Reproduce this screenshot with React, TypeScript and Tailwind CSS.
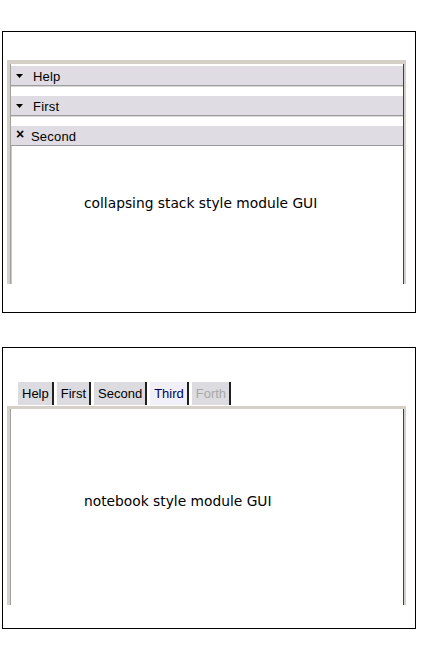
import React from 'react'

const HEAD = 'bg-[#dfdde3]'
const LIGHT = 'border-[#d4d0c8]'

function Down() {
  return (
    <svg width="7" height="4" viewBox="0 0 7 4" className="shrink-0">
      <polygon points="0,0 7,0 3.5,4" fill="#000" />
    </svg>
  )
}

function StackHeader({ label, open }: { label: string; open?: boolean }) {
  return (
    <div className={`h-[20px] ${HEAD} flex items-center pl-[5px] border-b border-[#9c9c9c]`}>
      {open ? (
        <span className="w-[7px] text-[14px] leading-none font-bold text-black -mt-[3px]">×</span>
      ) : (
        <Down />
      )}
      <span className={`${open ? 'ml-[8px]' : 'ml-[10px]'} mt-px text-[13px] leading-none text-black tracking-[0.2px]`}>{label}</span>
    </div>
  )
}

const TABS = [
  { label: 'Help', kind: 'normal' },
  { label: 'First', kind: 'normal' },
  { label: 'Second', kind: 'normal' },
  { label: 'Third', kind: 'active' },
  { label: 'Forth', kind: 'disabled' },
]

export default function App() {
  return (
    <div className="w-[421px] h-[650px] bg-white overflow-hidden" style={{ fontFamily: '"Liberation Sans", Arial, sans-serif' }}>
      {/* collapsing stack */}
      <div className="pt-[31px] pl-[2px]">
        <div className="w-[414px] h-[282px] border border-black pt-[28px] pl-[4px]">
          <div className={`w-[399px] h-[224px] border-t-[4px] border-l-[3px] border-r-[2px] ${LIGHT} bg-white`}>
            <div className="h-full pt-[2px] border-l border-r border-l-[#a0a0a0] border-r-[#404040] flex flex-col">
              {['Help', 'First'].map(l => (
                <div key={l}>
                  <StackHeader label={l} />
                  <div className="h-px bg-[#d8d8d8]" />
                  <div className="h-[9px] bg-white" />
                </div>
              ))}
              <StackHeader label="Second" open />
              <div className="flex-1 bg-white border-l border-[#c8c8c8] pt-[47px] pl-[72px]">
                <p className="text-[13.8px] text-black" style={{ fontFamily: '"DejaVu Sans", Verdana, sans-serif' }}>
                  collapsing stack style module GUI
                </p>
              </div>
            </div>
          </div>
        </div>
      </div>

      {/* notebook */}
      <div className="pt-[34px] pl-[2px]">
        <div className="w-[414px] h-[282px] border border-black pt-[34px] pl-[4px]">
          <div className="flex gap-[3px] pl-[11px] h-[23px]">
            {TABS.map(t => (
              <div key={t.label}
                className={`h-full flex items-center pl-[4px] pr-[3px] border-r-2 border-[#202020] text-[13px] leading-none ${
                  t.kind === 'active' ? 'bg-[#f1f0f9] text-[#000060]' : t.kind === 'disabled' ? 'bg-[#dcdbe0] text-[#a8a8a8]' : 'bg-[#dcdbe0] text-black'}`}>
                {t.label}
              </div>
            ))}
          </div>
          <div className={`mt-px w-[399px] h-[199px] border-t-[3px] border-l-[3px] border-r-[2px] ${LIGHT} bg-white`}>
            <div className="h-full border-l border-r border-l-[#a0a0a0] border-r-[#404040] pt-[82px] pl-[73px]">
              <p className="text-[13.8px] text-black" style={{ fontFamily: '"DejaVu Sans", Verdana, sans-serif' }}>
                notebook style module GUI
              </p>
            </div>
          </div>
        </div>
      </div>
    </div>
  )
}
